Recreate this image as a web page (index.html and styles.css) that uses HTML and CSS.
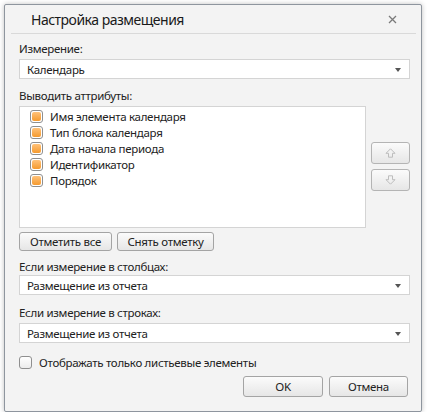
FILE: index.html
```html
<!DOCTYPE html>
<html lang="ru">
<head>
    <meta charset="UTF-8">
    <meta name="viewport" content="width=device-width, initial-scale=1.0">
    <title>Настройка размещения</title>
    <link rel="stylesheet" href="styles.css">
</head>
<body>

<div class="dialog">
    <div class="titlebar">
        <span class="title">Настройка размещения</span>
        <span class="close">
            <svg width="9" height="9" viewBox="0 0 9 9"><path d="M1 1 L8 8 M8 1 L1 8" stroke="#7a7a7a" stroke-width="1.3" fill="none"/></svg>
        </span>
    </div>

    <div class="content">
        <div class="label first">Измерение:</div>
        <div class="combo">
            <span>Календарь</span>
            <span class="arrow"></span>
        </div>

        <div class="label">Выводить аттрибуты:</div>
        <div class="list-row">
            <div class="list">
                <div class="item"><span class="check on"></span>Имя элемента календаря</div>
                <div class="item"><span class="check on"></span>Тип блока календаря</div>
                <div class="item"><span class="check on"></span>Дата начала периода</div>
                <div class="item"><span class="check on"></span>Идентификатор</div>
                <div class="item"><span class="check on"></span>Порядок</div>
            </div>
            <div class="move">
                <button class="btn small" disabled>
                    <svg width="11" height="10" viewBox="0 0 11 10"><path d="M5.5 0.8 L10 5.3 H7.5 V9.2 H3.5 V5.3 H1 Z" fill="none" stroke="#bdbdbd" stroke-width="1"/></svg>
                </button>
                <button class="btn small" disabled>
                    <svg width="11" height="10" viewBox="0 0 11 10"><path d="M5.5 9.2 L10 4.7 H7.5 V0.8 H3.5 V4.7 H1 Z" fill="none" stroke="#bdbdbd" stroke-width="1"/></svg>
                </button>
            </div>
        </div>

        <div class="btn-row">
            <button class="btn mark-all">Отметить все</button>
            <button class="btn unmark">Снять отметку</button>
        </div>

        <div class="label gap3">Если измерение в столбцах:</div>
        <div class="combo">
            <span>Размещение из отчета</span>
            <span class="arrow"></span>
        </div>

        <div class="label gap4">Если измерение в строках:</div>
        <div class="combo">
            <span>Размещение из отчета</span>
            <span class="arrow"></span>
        </div>

        <label class="leaf">
            <span class="check"></span>Отображать только листьевые элементы
        </label>

        <div class="footer">
            <button class="btn ok">OK</button>
            <button class="btn cancel">Отмена</button>
        </div>
    </div>
</div>

</body>
</html>
```

FILE: styles.css
```css
body {
    margin: 0;
    padding: 4px 0 0 4px;
    background-color: #ffffff;
    font-family: "Noto Sans", "Open Sans", sans-serif;
    font-size: 11.5px;
    letter-spacing: -0.3px;
    color: #222;
}
.dialog {
    width: 418px;
    height: 408px;
    box-sizing: border-box;
    border: 1px solid #8e959e;
    border-radius: 2px;
    background-color: #f3f3f3;
    box-shadow: 0 0 5px rgba(0, 0, 0, 0.25);
}
.titlebar {
    height: 28px;
    margin: 0 5px 0 6px;
    padding: 0 19px 0 20px;
    border-bottom: 1px solid #d9d9d9;
    display: flex;
    align-items: center;
    justify-content: space-between;
}
.title {
    font-size: 14px;
    letter-spacing: -0.5px;
    color: #1a1a1a;
}
.close {
    display: flex;
    margin-top: 1px;
}
.content {
    padding: 0 11px 0 14px;
}
.label {
    line-height: 16px;
    margin-top: 9px;
    margin-bottom: 2px;
}
.label.first {
    margin-top: 7px;
}
.label.gap3 {
    margin-top: 8px;
    margin-bottom: 0;
}
.label.gap4 {
    margin-top: 10px;
}
.combo {
    height: 20px;
    box-sizing: border-box;
    border: 1px solid #d4d4d4;
    background-color: #fff;
    display: flex;
    align-items: center;
    justify-content: space-between;
    padding: 0 8px 0 7px;
}
.arrow {
    width: 0;
    height: 0;
    border-left: 3.5px solid transparent;
    border-right: 3.5px solid transparent;
    border-top: 4px solid #555;
    margin-top: 1px;
}
.list-row {
    display: flex;
    gap: 5px;
}
.list {
    width: 347px;
    height: 122px;
    box-sizing: border-box;
    border: 1px solid #d4d4d4;
    background-color: #fff;
    padding: 1px 0 0 10px;
}
.item {
    height: 16px;
    display: flex;
    align-items: center;
    gap: 7px;
}
.check {
    width: 13px;
    height: 13px;
    box-sizing: border-box;
    border: 1px solid #8f8f8f;
    border-radius: 3px;
    background: linear-gradient(#ffffff, #ececec);
    display: inline-block;
    flex: none;
}
.check.on {
    padding: 1px;
    background: #fff;
    background-clip: padding-box;
}
.check.on::after {
    content: "";
    display: block;
    width: 100%;
    height: 100%;
    border-radius: 2px;
    background: linear-gradient(#ffc27a, #f59a2f);
}
.move {
    padding-top: 36px;
    display: flex;
    flex-direction: column;
    gap: 5px;
}
.btn {
    font-family: inherit;
    font-size: inherit;
    letter-spacing: inherit;
    color: #222;
    border: 1px solid #a4a4a4;
    border-radius: 3px;
    background: linear-gradient(#fbfbfb, #e6e6e6);
    padding: 0;
    box-sizing: border-box;
    display: flex;
    align-items: center;
    justify-content: center;
}
.btn.small {
    width: 39px;
    height: 22px;
    border-color: #b4b4b4;
}
.btn-row {
    display: flex;
    gap: 5px;
    margin-top: 4px;
}
.btn-row .btn {
    height: 19px;
}
.mark-all {
    width: 93px;
}
.unmark {
    width: 97px;
}
.leaf {
    display: flex;
    align-items: center;
    gap: 7px;
    margin-top: 13px;
    height: 13px;
}
.footer {
    display: flex;
    justify-content: flex-end;
    gap: 6px;
    margin: 7px 2px 0 0;
}
.footer .btn {
    height: 21px;
}
.ok {
    width: 80px;
}
.cancel {
    width: 79px;
}
```
